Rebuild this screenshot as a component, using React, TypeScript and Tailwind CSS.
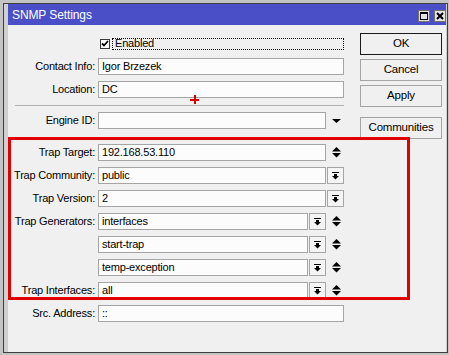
import React from "react";

const Spin = () => (
  <svg width="9" height="11" viewBox="0 0 9 11">
    <polygon points="4.5,0 9,4.5 0,4.5" fill="#000" />
    <polygon points="0,6 9,6 4.5,10.5" fill="#000" />
  </svg>
);

const DownTri = () => (
  <svg width="9" height="4" viewBox="0 0 9 4">
    <polygon points="0,0 9,0 4.5,4" fill="#000" />
  </svg>
);

const DD = () => (
  <svg width="7" height="8" viewBox="0 0 7 8" shapeRendering="crispEdges">
    <rect x="0" y="0" width="7" height="1" fill="#000" />
    <rect x="2" y="2" width="3" height="2" fill="#000" />
    <polygon points="0,4 7,4 3.5,7.5" fill="#000" shapeRendering="auto" />
  </svg>
);

function Row({ label, children }: { label: string; children: React.ReactNode }) {
  return (
    <div className="flex h-[17px] items-center">
      <div className="w-[87px] text-right whitespace-nowrap">{label}</div>
      <div className="ml-[3px] flex h-full w-[246px]">{children}</div>
    </div>
  );
}

function Input({ value }: { value: string }) {
  return (
    <div className="flex h-full flex-1 items-center border border-[#a5a5a5] bg-[#fcfcfc] pl-[3px] whitespace-nowrap">
      {value}
    </div>
  );
}

function DropBtn() {
  return (
    <div className="h-full w-[18px] pl-[1px]">
      <div className="flex h-full items-center justify-center border border-[#a5a5a5] bg-[#f4f4f4]">
        <DD />
      </div>
    </div>
  );
}

function SpinBtn() {
  return (
    <div className="flex h-full w-[18px] items-center justify-center pl-[3px]">
      <Spin />
    </div>
  );
}

function Btn({ label, def }: { label: string; def?: boolean }) {
  return (
    <div
      className={
        "flex h-[22px] items-center justify-center bg-[#f0f0f0] border text-[11.5px] " +
        (def ? "border-[#1a1a1a]" : "border-[#a5a5a5]")
      }
    >
      {label}
    </div>
  );
}

export default function App() {
  return (
    <div className="relative h-[355px] w-[449px] overflow-hidden bg-[#c4c4c4] pl-[3px] pr-[1px] pt-[3px] pb-[2px] font-['Liberation_Sans',Arial,sans-serif] text-[11px] tracking-[-0.2px] text-black">
      <div className="flex h-full flex-col border border-[#404040] bg-[#cfcfcf] pl-[4px] pr-[1px]">
        {/* title bar */}
        <div className="flex h-[21px] items-center bg-[#4a4fc8] text-white">
          <span className="ml-[4px] text-[12px] tracking-[-0.1px]">SNMP Settings</span>
          <div className="ml-auto mt-[2px] flex gap-[4px]">
            <div className="flex h-[12px] w-[12px] items-center justify-center border border-[#707070] bg-[#e4e4e4]">
              <svg width="8" height="8" viewBox="0 0 8 8" shapeRendering="crispEdges">
                <rect x="0.5" y="0.5" width="7" height="7" fill="none" stroke="#000" />
                <rect x="0" y="0" width="8" height="2" fill="#000" />
              </svg>
            </div>
            <div className="flex h-[12px] w-[12px] items-center justify-center border border-[#707070] bg-[#e4e4e4]">
              <svg width="8" height="8" viewBox="0 0 8 8">
                <path d="M1 1 L7 7 M7 1 L1 7" stroke="#000" strokeWidth="2" />
              </svg>
            </div>
          </div>
        </div>
        {/* body */}
        <div className="flex flex-1 bg-[#f0f0f0]">
          <div className="flex flex-col gap-[6px] pt-[10px]">
            <div className="flex h-[17px] items-center">
              <div className="w-[87px]" />
              <div className="ml-[5px] flex h-full w-[244px] items-center">
                <div className="flex h-[10px] w-[10px] items-center justify-center border border-[#3a3a3a] bg-white">
                  <svg width="8" height="7" viewBox="0 0 8 7">
                    <path d="M1 3.5 L3 5.5 L7 1" stroke="#000" strokeWidth="1.8" fill="none" />
                  </svg>
                </div>
                <div className="ml-[2px] flex h-[12px] flex-1 items-center border border-dotted border-black pl-[2px]">
                  Enabled
                </div>
              </div>
            </div>
            <Row label="Contact Info:">
              <Input value="Igor Brzezek" />
            </Row>
            <Row label="Location:">
              <Input value="DC" />
            </Row>
            <div className="ml-[7px] mt-[1px] h-px w-[329px] bg-[#b0b0b0]" />
            <Row label="Engine ID:">
              <Input value="" />
              <div className="flex h-full w-[18px] items-center justify-center pl-[3px]">
                <DownTri />
              </div>
            </Row>
            <div className="mt-[9px] flex flex-col gap-[6px]">
              <Row label="Trap Target:">
                <Input value="192.168.53.110" />
                <SpinBtn />
              </Row>
              <Row label="Trap Community:">
                <Input value="public" />
                <DropBtn />
              </Row>
              <Row label="Trap Version:">
                <Input value="2" />
                <DropBtn />
              </Row>
              <Row label="Trap Generators:">
                <Input value="interfaces" />
                <DropBtn />
                <SpinBtn />
              </Row>
              <Row label="">
                <Input value="start-trap" />
                <DropBtn />
                <SpinBtn />
              </Row>
              <Row label="">
                <Input value="temp-exception" />
                <DropBtn />
                <SpinBtn />
              </Row>
              <Row label="Trap Interfaces:">
                <Input value="all" />
                <DropBtn />
                <SpinBtn />
              </Row>
              <Row label="Src. Address:">
                <Input value="::" />
              </Row>
            </div>
          </div>
          <div className="ml-[16px] flex w-[82px] flex-col pt-[8px]">
            <Btn label="OK" def />
            <div className="mt-[4px]">
              <Btn label="Cancel" />
            </div>
            <div className="mt-[4px]">
              <Btn label="Apply" />
            </div>
            <div className="mt-[10px]">
              <Btn label="Communities" />
            </div>
          </div>
        </div>
      </div>
      {/* red annotation box */}
      <div className="pointer-events-none absolute left-[8px] top-[137px] h-[163px] w-[402px] border-[3px] border-[#e00000]" />
      {/* red cross */}
      <div className="pointer-events-none absolute left-[190px] top-[95px] h-[9px] w-[9px]">
        <div className="absolute left-0 top-[3.5px] h-[2px] w-[9px] bg-[#d40000]" />
        <div className="absolute left-[3.5px] top-0 h-[9px] w-[2px] bg-[#d40000]" />
      </div>
    </div>
  );
}
